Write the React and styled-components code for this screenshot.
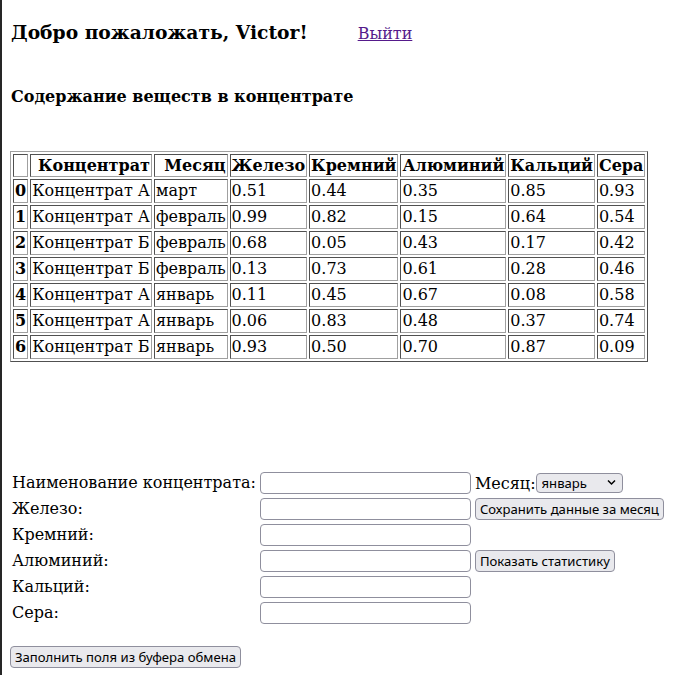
import React from "react";
import styled, { createGlobalStyle } from "styled-components";

const GlobalStyle = createGlobalStyle`
  html {
    background: #ffffff;
    box-shadow: inset 2px 0 0 #262626;
    min-height: 100%;
  }
  body {
    margin: 0;
    font-family: "DejaVu Serif", serif;
    font-size: 16px;
    color: #000000;
  }
`;

const Page = styled.div`
  padding: 21px 10px 8px 10px;
`;

const Header = styled.div`
  display: flex;
  align-items: baseline;
  gap: 50px;
  padding-left: 1px;
`;

const Title = styled.h3`
  margin: 0;
  font-size: 18.72px;
  font-weight: bold;
`;

const Logout = styled.a`
  color: #551a8b;
  text-decoration: underline;
  font-size: 16px;
`;

const SectionTitle = styled.h4`
  margin: 44px 0 0 1px;
  font-size: 16px;
  font-weight: bold;
`;

const DataTable = styled.table`
  margin-top: 45px;
  border-collapse: separate;
  border-spacing: 2px;
  border: 1px solid;
  border-color: #a0a0a0 #505050 #505050 #a0a0a0;
`;

const HeadCell = styled.th`
  padding: 1px;
  border: 1px solid;
  border-color: #505050 #a0a0a0 #a0a0a0 #505050;
  text-align: right;
  font-weight: bold;
  line-height: 19px;
`;

const IndexCell = styled.th`
  padding: 1px;
  border: 1px solid;
  border-color: #505050 #a0a0a0 #a0a0a0 #505050;
  text-align: left;
  font-weight: bold;
  line-height: 20px;
`;

const Cell = styled.td`
  padding: 1px;
  border: 1px solid;
  border-color: #505050 #a0a0a0 #a0a0a0 #505050;
  text-align: left;
  line-height: 20px;
  white-space: nowrap;
`;

const Form = styled.div`
  margin-top: 110px;
  margin-left: 2px;
  display: grid;
  grid-template-columns: max-content 211px max-content;
  column-gap: 4px;
  row-gap: 4px;
  align-items: center;
`;

const Label = styled.label`
  font-size: 16px;
  line-height: 22px;
`;

const TextInput = styled.input`
  box-sizing: border-box;
  width: 211px;
  height: 22px;
  border: 1px solid #8f8f9d;
  border-radius: 4px;
  background: #ffffff;
  padding: 0 4px;
`;

const SideCell = styled.div`
  display: flex;
  align-items: center;
  gap: 0;
  font-size: 16px;
`;

const SelectWrap = styled.div`
  position: relative;
  display: inline-flex;
`;

const Select = styled.select`
  appearance: none;
  box-sizing: border-box;
  width: 87px;
  height: 20px;
  border: 1px solid #8f8f9d;
  border-radius: 4px;
  background: #e9e9ed;
  font-family: "Noto Sans", sans-serif;
  font-size: 13.12px;
  padding: 0 0 0 5px;
  color: #000;
`;

const Chevron = styled.svg`
  position: absolute;
  right: 7px;
  top: 6px;
  pointer-events: none;
`;

const Button = styled.button`
  box-sizing: border-box;
  height: 22px;
  border: 1px solid #8f8f9d;
  border-radius: 4px;
  background: #e9e9ed;
  font-family: "Noto Sans", sans-serif;
  font-size: 13.12px;
  padding: 0 4px;
  color: #000;
  line-height: 18px;
  white-space: nowrap;
`;

const BottomButton = styled(Button)`
  margin-top: 22px;
`;

const headers = ["", "Концентрат", "Месяц", "Железо", "Кремний", "Алюминий", "Кальций", "Сера"];

const rows = [
  ["0", "Концентрат А", "март", "0.51", "0.44", "0.35", "0.85", "0.93"],
  ["1", "Концентрат А", "февраль", "0.99", "0.82", "0.15", "0.64", "0.54"],
  ["2", "Концентрат Б", "февраль", "0.68", "0.05", "0.43", "0.17", "0.42"],
  ["3", "Концентрат Б", "февраль", "0.13", "0.73", "0.61", "0.28", "0.46"],
  ["4", "Концентрат А", "январь", "0.11", "0.45", "0.67", "0.08", "0.58"],
  ["5", "Концентрат А", "январь", "0.06", "0.83", "0.48", "0.37", "0.74"],
  ["6", "Концентрат Б", "январь", "0.93", "0.50", "0.70", "0.87", "0.09"],
];

const fields = [
  { label: "Наименование концентрата:", side: "month" },
  { label: "Железо:", side: "save" },
  { label: "Кремний:", side: null },
  { label: "Алюминий:", side: "stats" },
  { label: "Кальций:", side: null },
  { label: "Сера:", side: null },
];

function Side({ kind }) {
  if (kind === "month") {
    return (
      <SideCell>
        Месяц:
        <SelectWrap>
          <Select defaultValue="январь">
            <option>январь</option>
            <option>февраль</option>
            <option>март</option>
          </Select>
          <Chevron width="9" height="7" viewBox="0 0 9 7">
            <path d="M1 1.5 L4.5 5 L8 1.5" fill="none" stroke="#000" strokeWidth="1.5" />
          </Chevron>
        </SelectWrap>
      </SideCell>
    );
  }
  if (kind === "save") {
    return (
      <SideCell>
        <Button>Сохранить данные за месяц</Button>
      </SideCell>
    );
  }
  if (kind === "stats") {
    return (
      <SideCell>
        <Button>Показать статистику</Button>
      </SideCell>
    );
  }
  return <SideCell />;
}

export default function App() {
  return (
    <>
      <GlobalStyle />
      <Page>
        <Header>
          <Title>Добро пожаложать, Victor!</Title>
          <Logout href="#">Выйти</Logout>
        </Header>
        <SectionTitle>Содержание веществ в концентрате</SectionTitle>
        <DataTable>
          <thead>
            <tr>
              {headers.map((h, i) => (
                <HeadCell key={i}>{h}</HeadCell>
              ))}
            </tr>
          </thead>
          <tbody>
            {rows.map((r) => (
              <tr key={r[0]}>
                <IndexCell>{r[0]}</IndexCell>
                {r.slice(1).map((v, i) => (
                  <Cell key={i}>{v}</Cell>
                ))}
              </tr>
            ))}
          </tbody>
        </DataTable>
        <Form>
          {fields.map((f) => (
            <React.Fragment key={f.label}>
              <Label>{f.label}</Label>
              <TextInput type="text" />
              <Side kind={f.side} />
            </React.Fragment>
          ))}
        </Form>
        <BottomButton>Заполнить поля из буфера обмена</BottomButton>
      </Page>
    </>
  );
}
